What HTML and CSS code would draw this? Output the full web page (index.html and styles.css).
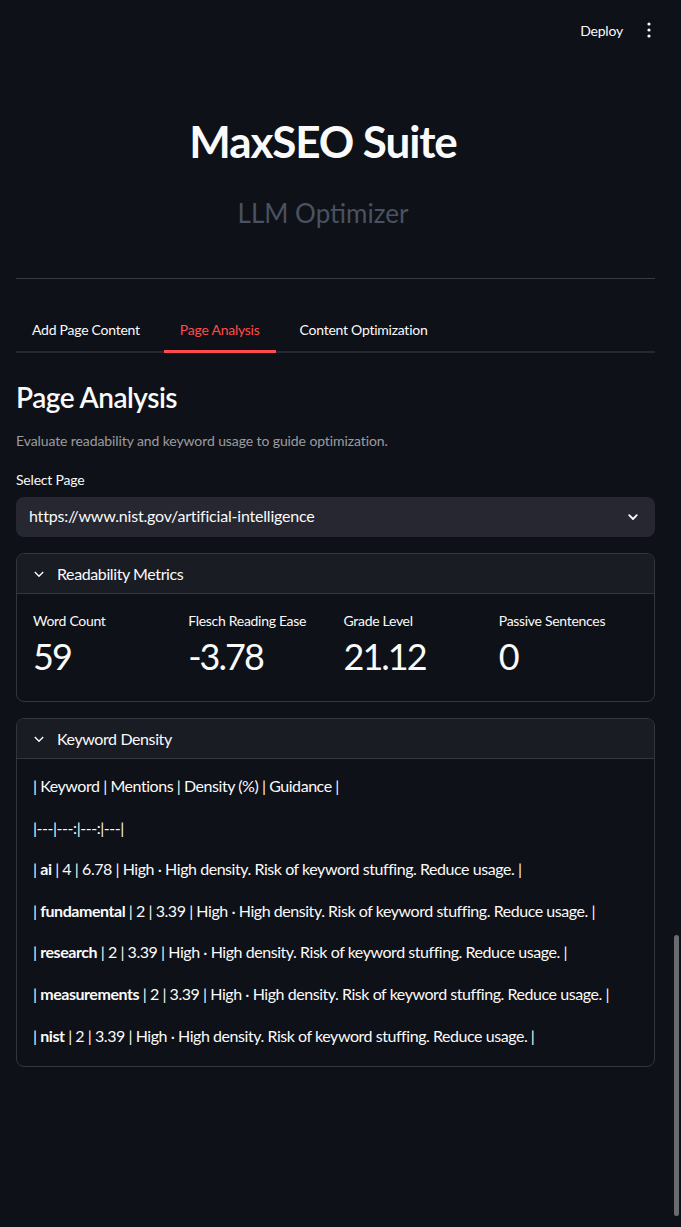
FILE: index.html
```html
<!DOCTYPE html>
<html>
<head>
<meta charset="utf-8">
<link rel="stylesheet" href="styles.css">
</head>
<body>
<div class="app">
  <header class="topbar">
    <span class="deploy">Deploy</span>
    <span class="menu" aria-label="menu">
      <svg width="4" height="16" viewBox="0 0 4 16"><circle cx="2" cy="2" r="1.6"/><circle cx="2" cy="8" r="1.6"/><circle cx="2" cy="14" r="1.6"/></svg>
    </span>
  </header>

  <main class="main">
    <h1 class="title">MaxSEO Suite</h1>
    <p class="subtitle">LLM Optimizer</p>
    <hr class="divider">

    <nav class="tabs">
      <div class="tab">Add Page Content</div>
      <div class="tab active">Page Analysis</div>
      <div class="tab">Content Optimization</div>
    </nav>

    <h2 class="section-title">Page Analysis</h2>
    <p class="caption">Evaluate readability and keyword usage to guide optimization.</p>

    <label class="field-label">Select Page</label>
    <div class="select">
      <span class="select-text">https://www.nist.gov/artificial-intelligence</span>
      <svg class="select-chev" width="12" height="12" viewBox="0 0 12 12"><path d="M2.2 4.2 6 8 9.8 4.2" fill="none" stroke="#fafafa" stroke-width="1.8" stroke-linecap="round" stroke-linejoin="round"/></svg>
    </div>

    <section class="expander">
      <div class="exp-head">
        <svg class="exp-chev" width="12" height="12" viewBox="0 0 12 12"><path d="M1.8 4 6 8.2 10.2 4" fill="none" stroke="#fafafa" stroke-width="1.4"/></svg>
        <span>Readability Metrics</span>
      </div>
      <div class="exp-body metrics">
        <div class="metric"><div class="m-label">Word Count</div><div class="m-value">59</div></div>
        <div class="metric"><div class="m-label">Flesch Reading Ease</div><div class="m-value">-3.78</div></div>
        <div class="metric"><div class="m-label">Grade Level</div><div class="m-value">21.12</div></div>
        <div class="metric"><div class="m-label">Passive Sentences</div><div class="m-value">0</div></div>
      </div>
    </section>

    <section class="expander">
      <div class="exp-head">
        <svg class="exp-chev" width="12" height="12" viewBox="0 0 12 12"><path d="M1.8 4 6 8.2 10.2 4" fill="none" stroke="#fafafa" stroke-width="1.4"/></svg>
        <span>Keyword Density</span>
      </div>
      <div class="exp-body md">
        <p>| Keyword | Mentions | Density (%) | Guidance |</p>
        <p>|---|---:|---:|---|</p>
        <p>| <b>ai</b> | 4 | 6.78 | High · High density. Risk of keyword stuffing. Reduce usage. |</p>
        <p>| <b>fundamental</b> | 2 | 3.39 | High · High density. Risk of keyword stuffing. Reduce usage. |</p>
        <p>| <b>research</b> | 2 | 3.39 | High · High density. Risk of keyword stuffing. Reduce usage. |</p>
        <p>| <b>measurements</b> | 2 | 3.39 | High · High density. Risk of keyword stuffing. Reduce usage. |</p>
        <p>| <b>nist</b> | 2 | 3.39 | High · High density. Risk of keyword stuffing. Reduce usage. |</p>
      </div>
    </section>
  </main>
  <div class="scroll-thumb"></div>
</div>
</body>
</html>
```

FILE: styles.css
```css
* { box-sizing: border-box; }
html, body {
  margin: 0;
  padding: 0;
  background: #0e1117;
  color: #fafafa;
  font-family: "Lato", "Noto Sans", sans-serif;
}
.app {
  min-height: 1227px;
}
.topbar {
  height: 60px;
  display: flex;
  align-items: center;
  justify-content: flex-end;
  padding-right: 30px;
}
.deploy {
  font-size: 14px;
  letter-spacing: -0.2px;
  margin-right: 24px;
}
.menu svg { fill: #fafafa; display: block; }

.main {
  padding: 0 26px 0 16px;
}
.title {
  margin: 58px 0 0;
  padding-right: 25px;
  text-align: center;
  font-size: 44px;
  font-weight: 700;
  line-height: 46px;
  letter-spacing: -1.1px;
}
.subtitle {
  margin: 32px 0 0;
  padding-right: 25px;
  text-align: center;
  font-size: 26px;
  line-height: 34px;
  color: #4a5160;
}
.divider {
  margin: 48px 0 0;
  border: 0;
  border-top: 1px solid #3a3c44;
}
.tabs {
  margin-top: 34px;
  display: flex;
  gap: 8px;
  border-bottom: 2px solid #262730;
}
.tab {
  padding: 0 16px;
  height: 40px;
  line-height: 34px;
  font-size: 14px;
  letter-spacing: -0.25px;
  margin-bottom: -2px;
  border-bottom: 2px solid transparent;
}
.tab.active {
  color: #ff4b4b;
  border-bottom: 3px solid #ff4b4b;
}
.section-title {
  margin: 28px 0 0;
  font-size: 28px;
  font-weight: 600;
  line-height: 32px;
  letter-spacing: -0.5px;
}
.caption {
  margin: 18px 0 0;
  font-size: 14px;
  line-height: 20px;
  letter-spacing: -0.1px;
  color: rgba(250, 250, 250, 0.6);
}
.field-label {
  display: block;
  margin-top: 19px;
  font-size: 14px;
  line-height: 20px;
  letter-spacing: -0.2px;
}
.select {
  margin-top: 7px;
  height: 40px;
  background: #262730;
  border-radius: 8px;
  display: flex;
  align-items: center;
  justify-content: space-between;
  padding: 0 16px 0 13px;
  font-size: 16px;
  letter-spacing: -0.2px;
}
.select-text {
  line-height: 20px;
  margin-bottom: 3px;
}
.expander {
  margin-top: 16px;
  border: 1px solid #34363e;
  border-radius: 8px;
  overflow: hidden;
}
.exp-head {
  height: 40px;
  display: flex;
  align-items: center;
  gap: 12px;
  padding-left: 16px;
  background: #1a1c24;
  border-bottom: 1px solid #34363e;
  font-size: 16px;
  letter-spacing: -0.4px;
}
.exp-chev { display: block; }
.metrics {
  display: grid;
  grid-template-columns: repeat(4, 1fr);
  gap: 16px;
  padding: 16px 16px 21px 16px;
}
.m-label {
  font-size: 14px;
  line-height: 22px;
  letter-spacing: -0.3px;
}
.m-value {
  font-size: 36px;
  line-height: 48px;
  letter-spacing: -2px;
}
.md {
  padding: 14px 16px 18px;
  letter-spacing: -0.45px;
}
.md p {
  margin: 0 0 16px;
  font-size: 16px;
  line-height: 25.6px;
}
.md p:last-child { margin-bottom: 0; }
.md b { font-weight: 700; }
.scroll-thumb {
  position: fixed;
  left: 674px;
  top: 935px;
  width: 5px;
  height: 281px;
  border-radius: 3px;
  background: #6b6c70;
}
```
